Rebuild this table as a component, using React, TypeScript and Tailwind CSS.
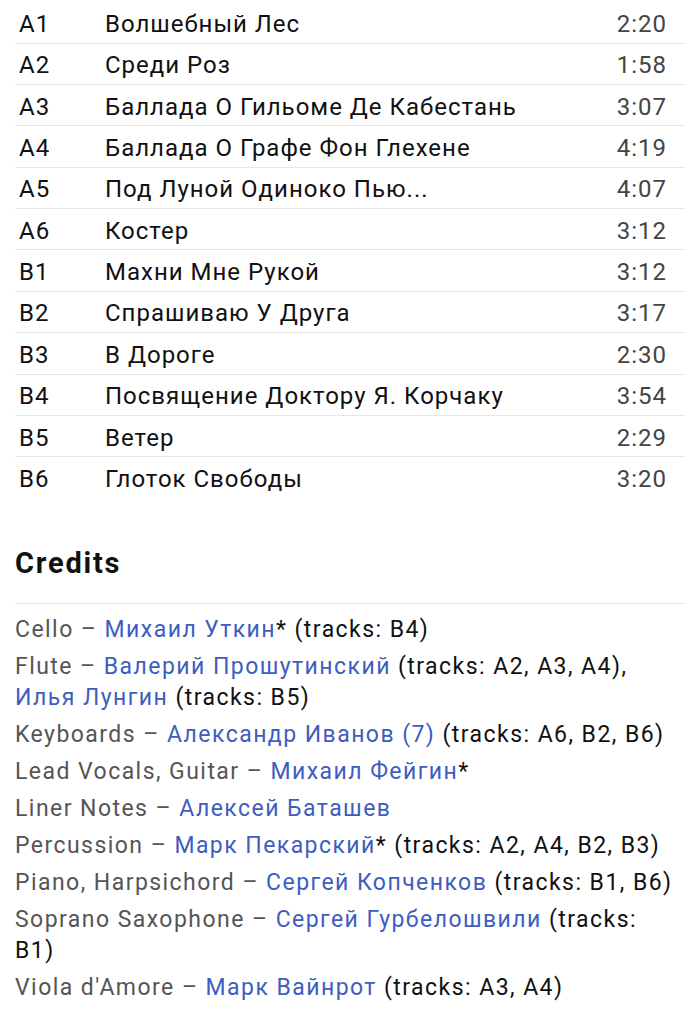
import React from "react";

const tracks: [string, string, string][] = [
  ["A1", "Волшебный Лес", "2:20"],
  ["A2", "Среди Роз", "1:58"],
  ["A3", "Баллада О Гильоме Де Кабестань", "3:07"],
  ["A4", "Баллада О Графе Фон Глехене", "4:19"],
  ["A5", "Под Луной Одиноко Пью...", "4:07"],
  ["A6", "Костер", "3:12"],
  ["B1", "Махни Мне Рукой", "3:12"],
  ["B2", "Спрашиваю У Друга", "3:17"],
  ["B3", "В Дороге", "2:30"],
  ["B4", "Посвящение Доктору Я. Корчаку", "3:54"],
  ["B5", "Ветер", "2:29"],
  ["B6", "Глоток Свободы", "3:20"],
];

function L({ children }: { children: React.ReactNode }) {
  return <a className="text-[#3d5dc0]">{children}</a>;
}

function T({ children }: { children: React.ReactNode }) {
  return <span className="text-[#111]">{children}</span>;
}

export default function App() {
  return (
    <div
      className="bg-white w-[700px] min-h-[1024px] px-[15px] pt-[2.3px]"
      style={{ fontFamily: "Roboto, 'Noto Sans', sans-serif" }}
    >
      <div className="flex flex-col">
        {tracks.map(([pos, title, dur], i) => (
          <div
            key={pos}
            className={`flex items-center h-[41.36px] pt-[3px] text-[24px] leading-[28px] tracking-[1px] ${
              i < tracks.length - 1 ? "border-b border-[#e6e6e6]" : ""
            }`}
          >
            <div className="w-[90px] pl-[4px] text-[#111]">{pos}</div>
            <div className="flex-1 text-[#111]">{title}</div>
            <div className="pr-[18px] text-[#444]">{dur}</div>
          </div>
        ))}
      </div>

      <h2 className="mt-[47px] text-[29px] leading-[34px] font-bold tracking-[1.8px] text-[#111]">
        Credits
      </h2>
      <div className="mt-[23px] border-t border-[#e6e6e6] pt-[10.5px]">
        <ul className="flex flex-col gap-[6px] pr-[10px] text-[23px] leading-[31px] tracking-[1.45px] text-[#555]">
          <li>
            Cello – <L>Михаил Уткин</L>
            <T>* (tracks: B4)</T>
          </li>
          <li>
            Flute – <L>Валерий Прошутинский</L> <T>(tracks: A2, A3, A4),</T>{" "}
            <L>Илья Лунгин</L> <T>(tracks: B5)</T>
          </li>
          <li>
            Keyboards – <L>Александр Иванов (7)</L>{" "}
            <T>(tracks: A6, B2, B6)</T>
          </li>
          <li>
            Lead Vocals, Guitar – <L>Михаил Фейгин</L>
            <T>*</T>
          </li>
          <li>
            Liner Notes – <L>Алексей Баташев</L>
          </li>
          <li>
            Percussion – <L>Марк Пекарский</L>
            <T>* (tracks: A2, A4, B2, B3)</T>
          </li>
          <li>
            Piano, Harpsichord – <L>Сергей Копченков</L>{" "}
            <T>(tracks: B1, B6)</T>
          </li>
          <li>
            Soprano Saxophone – <L>Сергей Гурбелошвили</L>{" "}
            <T>(tracks: B1)</T>
          </li>
          <li>
            Viola d'Amore – <L>Марк Вайнрот</L> <T>(tracks: A3, A4)</T>
          </li>
        </ul>
      </div>
    </div>
  );
}
